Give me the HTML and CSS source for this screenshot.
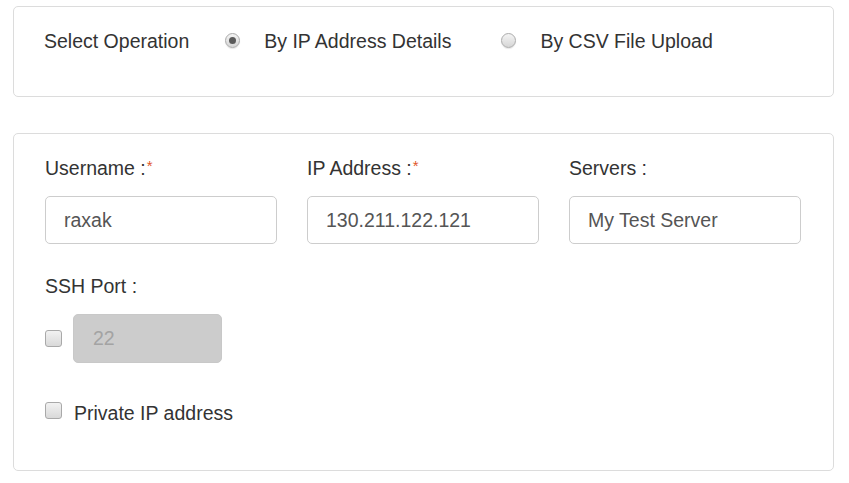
FILE: index.html
```html
<!DOCTYPE html>
<html>
<head>
<meta charset="utf-8">
<link rel="stylesheet" href="styles.css">
</head>
<body>
<div class="panel panel-op">
  <div class="op-row">
    <span class="op-label">Select Operation</span>
    <label class="radio-opt"><span class="radio checked"></span>By IP Address Details</label>
    <label class="radio-opt"><span class="radio"></span>By CSV File Upload</label>
  </div>
</div>
<div class="panel panel-form">
  <div class="grid">
    <div class="field">
      <div class="label">Username :<span class="req">*</span></div>
      <div class="input">raxak</div>
    </div>
    <div class="field">
      <div class="label">IP Address :<span class="req">*</span></div>
      <div class="input">130.211.122.121</div>
    </div>
    <div class="field">
      <div class="label">Servers :</div>
      <div class="input">My Test Server</div>
    </div>
  </div>
  <div class="label ssh-label">SSH Port :</div>
  <div class="ssh-row">
    <span class="checkbox"></span>
    <div class="input disabled">22</div>
  </div>
  <label class="private-row"><span class="checkbox"></span>Private IP address</label>
</div>
</body>
</html>
```
FILE: styles.css
```css
* { box-sizing: border-box; }
body {
  margin: 0;
  padding: 6px 15px 0 13px;
  font-family: "Liberation Sans", Arial, sans-serif;
  font-size: 19.5px;
  color: #333;
  background: #fff;
}
.panel {
  border: 1px solid #dcdcdc;
  border-radius: 5px;
  background: #fff;
}
.panel-op {
  height: 91px;
  padding: 20px 30px 0 30px;
}
.op-row {
  display: flex;
  align-items: center;
  height: 28px;
}
.op-label { margin-right: 36px; }
.radio-opt {
  display: flex;
  align-items: center;
  margin-right: 50px;
}
.radio {
  width: 15px;
  height: 15px;
  border-radius: 50%;
  border: 1px solid #ababab;
  background: linear-gradient(#f4f4f4, #d6d6d6);
  margin-right: 24px;
  position: relative;
  top: -1px;
  box-shadow: 0 1px 1px rgba(0,0,0,0.1);
}
.radio.checked::after {
  content: "";
  position: absolute;
  left: 3px;
  top: 3px;
  width: 7px;
  height: 7px;
  border-radius: 50%;
  background: #5a5a5a;
}
.panel-form {
  margin-top: 36px;
  height: 338px;
  padding: 22px 32px 0 31px;
}
.grid {
  display: grid;
  grid-template-columns: 232px 232px 232px;
  column-gap: 30px;
}
.label {
  height: 24px;
  line-height: 24px;
}
.req {
  color: #e0572b;
  font-size: 15px;
  position: relative;
  top: -4px;
  margin-left: 1px;
}
.input {
  margin-top: 16px;
  height: 48px;
  line-height: 46px;
  border: 1px solid #cdcdcd;
  border-radius: 5px;
  padding: 0 18px;
  color: #555;
}
.ssh-label { margin-top: 30px; }
.ssh-row {
  display: flex;
  align-items: center;
  margin-top: 16px;
}
.ssh-row .input {
  margin-top: 0;
  width: 149px;
  height: 49px;
  line-height: 47px;
  background: #cccccc;
  border-color: #c8c8c8;
  color: #a3a3a3;
  padding-left: 19px;
}
.checkbox {
  width: 17px;
  height: 17px;
  border: 1px solid #a9a9a9;
  border-radius: 3px;
  background: linear-gradient(#f2f2f2, #d9d9d9);
  margin-right: 11px;
  flex: none;
}
.private-row {
  display: flex;
  align-items: center;
  margin-top: 38px;
  height: 24px;
}
.private-row .checkbox { margin-right: 12px; position: relative; top: -3px; }
```
